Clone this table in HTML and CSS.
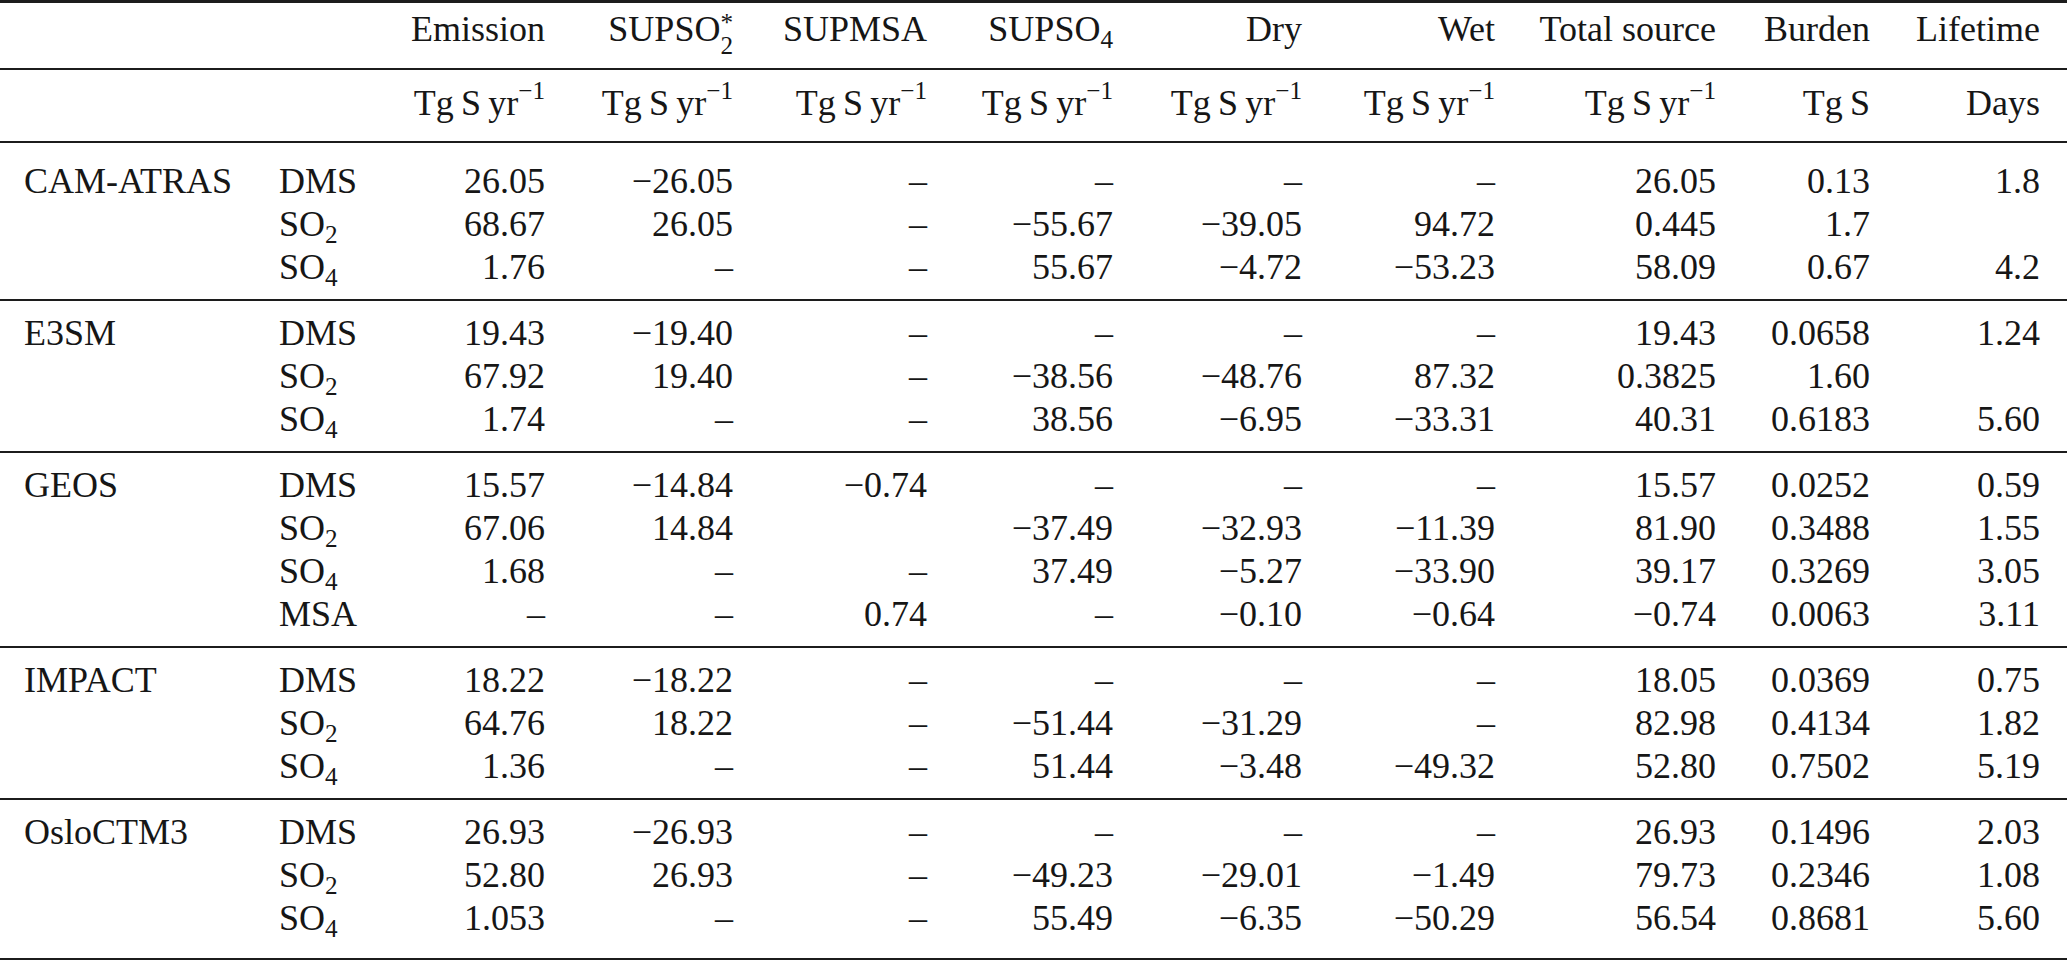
FILE: index.html
```html
<!DOCTYPE html>
<html lang="en">
<head>
<meta charset="utf-8">
<title>Sulfur budget table</title>
<link rel="stylesheet" href="styles.css">
</head>
<body>
<table class="budget">
  <colgroup>
    <col class="c-model"><col class="c-spec"><col class="c-emis"><col class="c-so2"><col class="c-msa"><col class="c-so4"><col class="c-dry"><col class="c-wet"><col class="c-tot"><col class="c-bur"><col class="c-life">
  </colgroup>
  <thead>
    <tr class="head">
      <th class="l"></th><th class="l"></th>
      <th>Emission</th>
      <th>SUPSO<span class="stack">*<br>2</span></th>
      <th>SUPMSA</th>
      <th>SUPSO<sub>4</sub></th>
      <th>Dry</th>
      <th>Wet</th>
      <th>Total source</th>
      <th>Burden</th>
      <th>Lifetime</th>
    </tr>
    <tr class="units">
      <th class="l"></th><th class="l"></th>
      <th>Tg&#8201;S&#8201;yr<sup>−1</sup></th>
      <th>Tg&#8201;S&#8201;yr<sup>−1</sup></th>
      <th>Tg&#8201;S&#8201;yr<sup>−1</sup></th>
      <th>Tg&#8201;S&#8201;yr<sup>−1</sup></th>
      <th>Tg&#8201;S&#8201;yr<sup>−1</sup></th>
      <th>Tg&#8201;S&#8201;yr<sup>−1</sup></th>
      <th>Tg&#8201;S&#8201;yr<sup>−1</sup></th>
      <th>Tg&#8201;S</th>
      <th>Days</th>
    </tr>
  </thead>
  <tbody>
    <tr class="first"><td class="l">CAM-ATRAS</td><td class="l">DMS</td><td>26.05</td><td>−26.05</td><td>–</td><td>–</td><td>–</td><td>–</td><td>26.05</td><td>0.13</td><td>1.8</td></tr>
    <tr><td class="l"></td><td class="l">SO<sub>2</sub></td><td>68.67</td><td>26.05</td><td>–</td><td>−55.67</td><td>−39.05</td><td>94.72</td><td>0.445</td><td>1.7</td><td></td></tr>
    <tr class="last"><td class="l"></td><td class="l">SO<sub>4</sub></td><td>1.76</td><td>–</td><td>–</td><td>55.67</td><td>−4.72</td><td>−53.23</td><td>58.09</td><td>0.67</td><td>4.2</td></tr>
  </tbody>
  <tbody>
    <tr class="first"><td class="l">E3SM</td><td class="l">DMS</td><td>19.43</td><td>−19.40</td><td>–</td><td>–</td><td>–</td><td>–</td><td>19.43</td><td>0.0658</td><td>1.24</td></tr>
    <tr><td class="l"></td><td class="l">SO<sub>2</sub></td><td>67.92</td><td>19.40</td><td>–</td><td>−38.56</td><td>−48.76</td><td>87.32</td><td>0.3825</td><td>1.60</td><td></td></tr>
    <tr class="last"><td class="l"></td><td class="l">SO<sub>4</sub></td><td>1.74</td><td>–</td><td>–</td><td>38.56</td><td>−6.95</td><td>−33.31</td><td>40.31</td><td>0.6183</td><td>5.60</td></tr>
  </tbody>
  <tbody>
    <tr class="first"><td class="l">GEOS</td><td class="l">DMS</td><td>15.57</td><td>−14.84</td><td>−0.74</td><td>–</td><td>–</td><td>–</td><td>15.57</td><td>0.0252</td><td>0.59</td></tr>
    <tr><td class="l"></td><td class="l">SO<sub>2</sub></td><td>67.06</td><td>14.84</td><td></td><td>−37.49</td><td>−32.93</td><td>−11.39</td><td>81.90</td><td>0.3488</td><td>1.55</td></tr>
    <tr><td class="l"></td><td class="l">SO<sub>4</sub></td><td>1.68</td><td>–</td><td>–</td><td>37.49</td><td>−5.27</td><td>−33.90</td><td>39.17</td><td>0.3269</td><td>3.05</td></tr>
    <tr class="last"><td class="l"></td><td class="l">MSA</td><td>–</td><td>–</td><td>0.74</td><td>–</td><td>−0.10</td><td>−0.64</td><td>−0.74</td><td>0.0063</td><td>3.11</td></tr>
  </tbody>
  <tbody>
    <tr class="first"><td class="l">IMPACT</td><td class="l">DMS</td><td>18.22</td><td>−18.22</td><td>–</td><td>–</td><td>–</td><td>–</td><td>18.05</td><td>0.0369</td><td>0.75</td></tr>
    <tr><td class="l"></td><td class="l">SO<sub>2</sub></td><td>64.76</td><td>18.22</td><td>–</td><td>−51.44</td><td>−31.29</td><td>–</td><td>82.98</td><td>0.4134</td><td>1.82</td></tr>
    <tr class="last"><td class="l"></td><td class="l">SO<sub>4</sub></td><td>1.36</td><td>–</td><td>–</td><td>51.44</td><td>−3.48</td><td>−49.32</td><td>52.80</td><td>0.7502</td><td>5.19</td></tr>
  </tbody>
  <tbody>
    <tr class="first"><td class="l">OsloCTM3</td><td class="l">DMS</td><td>26.93</td><td>−26.93</td><td>–</td><td>–</td><td>–</td><td>–</td><td>26.93</td><td>0.1496</td><td>2.03</td></tr>
    <tr><td class="l"></td><td class="l">SO<sub>2</sub></td><td>52.80</td><td>26.93</td><td>–</td><td>−49.23</td><td>−29.01</td><td>−1.49</td><td>79.73</td><td>0.2346</td><td>1.08</td></tr>
    <tr class="last"><td class="l"></td><td class="l">SO<sub>4</sub></td><td>1.053</td><td>–</td><td>–</td><td>55.49</td><td>−6.35</td><td>−50.29</td><td>56.54</td><td>0.8681</td><td>5.60</td></tr>
  </tbody>
</table>
</body>
</html>
```
FILE: styles.css
```css
html, body {
  margin: 0;
  padding: 0;
  background: #ffffff;
}

.budget {
  width: 2067px;
  table-layout: fixed;
  border-collapse: separate;
  border-spacing: 0;
  border-top: 3px solid #1c1c1c;
  font-family: "Liberation Serif", "Times New Roman", serif;
  font-size: 36px;
  line-height: 43px;
  color: #161616;
}

.c-model { width: 254px; }
.c-spec  { width: 126px; }
.c-emis  { width: 190px; }
.c-so2   { width: 188px; }
.c-msa   { width: 194px; }
.c-so4   { width: 186px; }
.c-dry   { width: 189px; }
.c-wet   { width: 193px; }
.c-tot   { width: 221px; }
.c-bur   { width: 154px; }
.c-life  { width: 172px; }

.budget th,
.budget td {
  font-weight: normal;
  white-space: nowrap;
  text-align: right;
  padding: 0 25px 0 0;
  vertical-align: top;
}

.budget th:last-child,
.budget td:last-child {
  padding-right: 27px;
}

.budget .l {
  text-align: left;
  padding-right: 0;
  padding-left: 25px;
}

.budget td.l:first-child,
.budget th.l:first-child {
  padding-left: 24px;
}

.budget .head th {
  line-height: 45px;
  padding-top: 4px;
  padding-bottom: 16px;
  border-bottom: 2px solid #1c1c1c;
}

.budget .units th {
  line-height: 45px;
  padding-top: 11px;
  padding-bottom: 15px;
  border-bottom: 2px solid #1c1c1c;
}

.budget tr.first td {
  padding-top: 11px;
}

.budget tbody:first-of-type tr.first td {
  padding-top: 17px;
}

.budget tr.last td {
  padding-bottom: 10px;
  border-bottom: 2px solid #1c1c1c;
}

.budget tbody:last-of-type tr.last td {
  padding-bottom: 18px;
}

sub {
  font-size: 0.7em;
  line-height: 0;
  vertical-align: -0.27em;
}

sup {
  font-size: 0.7em;
  line-height: 0;
  vertical-align: 0.62em;
}

.stack {
  display: inline-block;
  height: 0;
  font-size: 0.7em;
  line-height: 23px;
  text-align: left;
  vertical-align: -0.5em;
}
```
